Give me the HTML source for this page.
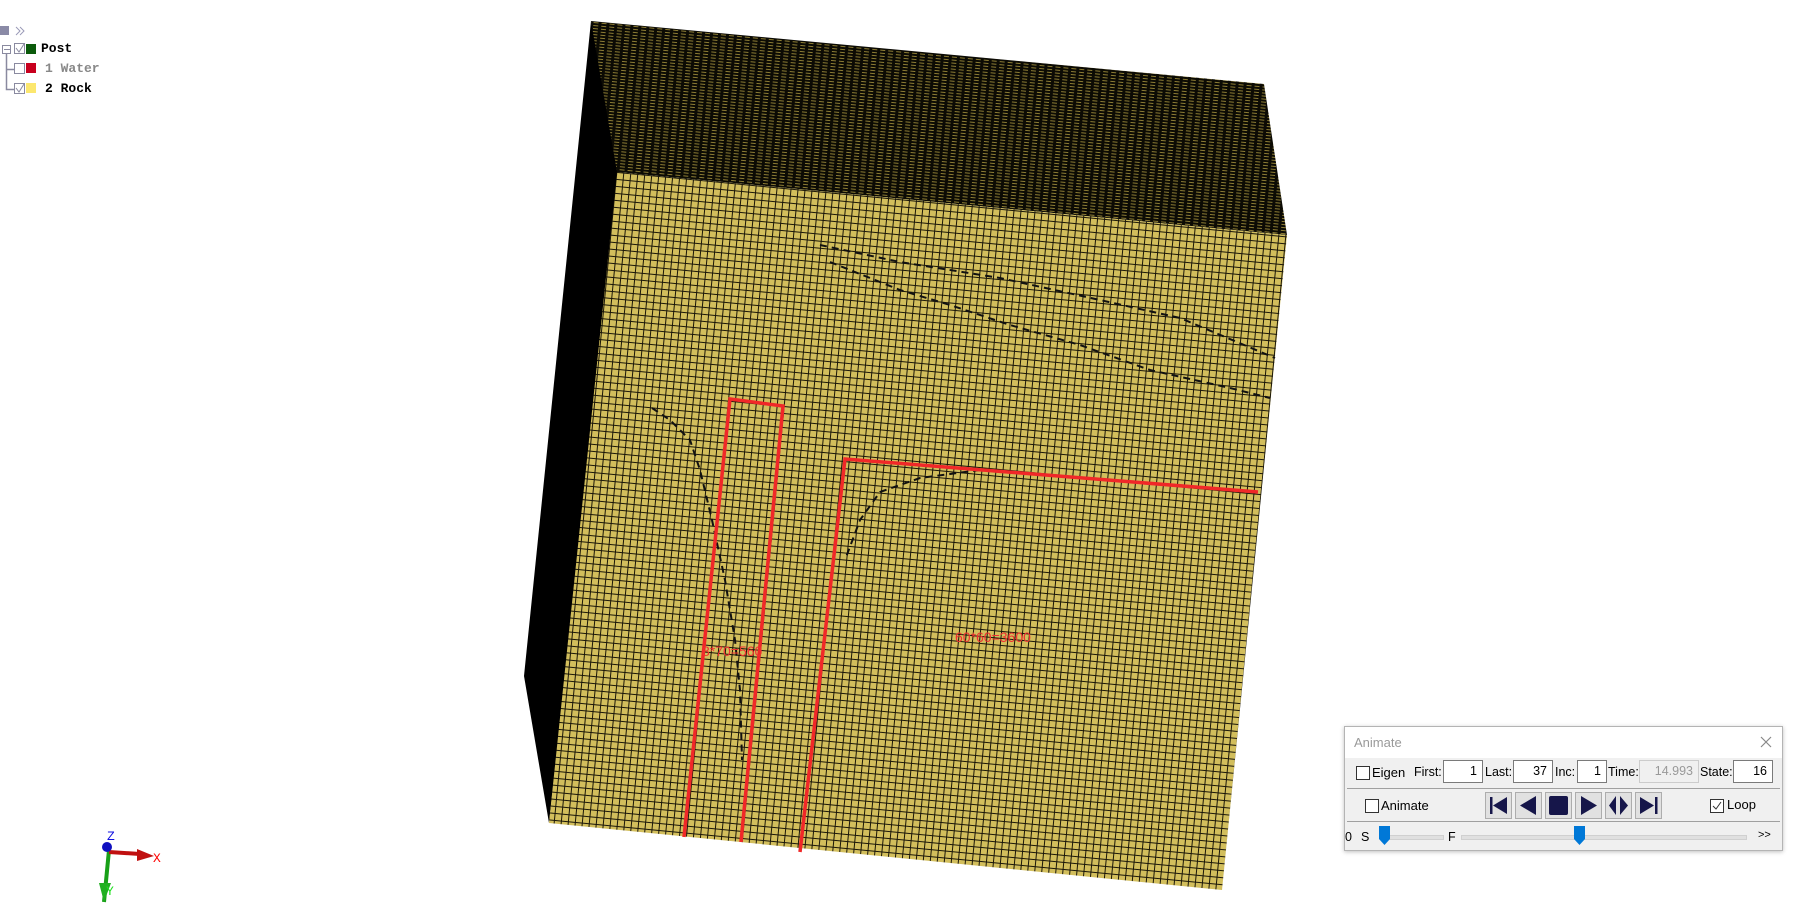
<!DOCTYPE html>
<html><head><meta charset="utf-8"><style>
html,body{margin:0;padding:0;background:#fff;width:1804px;height:908px;overflow:hidden;position:relative;font-family:"Liberation Sans","Noto Sans CJK SC",sans-serif}
.a{position:absolute}
.tree{font-family:"Liberation Mono","WenQuanYi Zen Hei",monospace;font-weight:bold;font-size:13px}
.pan{position:absolute;left:1344px;top:726px;width:437px;height:123px;background:#f0f0f0;border:1px solid #b4b4b4;box-shadow:0 1px 4px rgba(0,0,0,.25);font-size:12.5px;color:#000}
.pan .l{position:absolute;line-height:14px}
.inp{position:absolute;background:#fff;border:1px solid #7a7a7a;box-sizing:border-box;height:23px;text-align:right;padding-right:5px;line-height:21px;font-size:12.5px}
.cb{position:absolute;width:12px;height:12px;border:1px solid #333;background:#fff}
.btn{position:absolute;width:27px;height:27px;background:#e1e1e1;border:1px solid #adadad;box-sizing:border-box}
</style></head><body>
<svg class="a" style="left:0;top:0" width="1804" height="908">
<defs>
<pattern id="fg" width="7" height="7" patternUnits="userSpaceOnUse" patternTransform="rotate(5.5)">
<rect width="7" height="7" fill="#d2be5c"/><path d="M0 0.5H7M0.5 0V7" stroke="#1a1608" stroke-width="1"/>
</pattern>
<pattern id="tg" width="8" height="3" patternUnits="userSpaceOnUse" patternTransform="rotate(5.5)">
<rect width="8" height="3" fill="#0c0b04"/><rect x="1" y="1" width="5" height="1" fill="#8c7c34"/>
</pattern>
</defs>
<polygon points="591,21 622,171 549,823 524,676" fill="#000"/>
<polygon points="591,21 1264,84 1287,235 617,172" fill="url(#tg)"/>
<polygon points="617,172 1287,235 1222,890 549,823" fill="url(#fg)"/>
<g stroke="#111" stroke-width="2" fill="none" stroke-dasharray="7 5">
<path d="M820 245 L900 262 L1000 278 L1100 300 L1180 318 L1275 358"/>
<path d="M830 262 L900 290 L950 305 L1010 325 L1080 345 L1150 370 L1230 388 L1270 398"/>
<path d="M652 408 L670 420 L690 440 L700 470 L712 520 L725 580 L735 640 L740 690 L742 760"/>
<path d="M980 470 L920 478 L880 492 L860 520 L845 560"/>
</g>
<g stroke="#f02828" stroke-width="3.5" fill="none" stroke-linejoin="miter">
<path d="M684 837 L730 399 L783 406 L741 842"/>
<path d="M800 852 L845 459 L1258 492"/>
</g>
<text x="702" y="656" fill="#f03030" font-size="14" font-family="Liberation Sans,sans-serif">8*70=560</text>
<text x="955" y="642" fill="#f03030" font-size="14" font-family="Liberation Sans,sans-serif">60*60=3600</text>
<path d="M109 850 L104 902" stroke="#18a018" stroke-width="4"/>
<polygon points="99,883 111,883 104,902" fill="#20b020"/>
<path d="M109 852 L140 854" stroke="#c01010" stroke-width="4"/>
<polygon points="137,849 154,856 137,861" fill="#c01010"/>
<circle cx="107" cy="847" r="5" fill="#1010c0"/>
<text x="107" y="840" fill="#1010e0" font-size="13" font-family="Liberation Mono,monospace">Z</text>
<text x="153" y="862" fill="#f00" font-size="13" font-family="Liberation Mono,monospace">X</text>
<text x="106" y="895" fill="#20e020" font-size="13" font-family="Liberation Mono,monospace">Y</text>
<rect x="0" y="26" width="9" height="9" fill="#8a8aa6"/>
<path d="M16 27 L20 31 L16 35 M20 27 L24 31 L20 35" stroke="#9a9ab8" fill="none"/>
<rect x="2.5" y="45.5" width="8" height="8" fill="#fff" stroke="#8a8aa0"/>
<path d="M4 49.5H10" stroke="#8a8aa0"/>
<path d="M6.5 54 V89.5 H14 M6.5 69.5 H14" stroke="#8a8aa0" stroke-width="1.5" fill="none"/>
<rect x="14.5" y="43.5" width="10" height="10" fill="#fff" stroke="#8a8aa0"/>
<path d="M16 48 L19 52 L24 44" stroke="#8a8aa0" fill="none"/>
<rect x="26" y="44" width="10" height="10" fill="#0b5a0b"/>
<rect x="14.5" y="63.5" width="10" height="10" fill="#fff" stroke="#8a8aa0"/>
<rect x="26" y="63" width="10" height="10" fill="#c8001e"/>
<rect x="14.5" y="83.5" width="10" height="10" fill="#fff" stroke="#8a8aa0"/>
<path d="M16 88 L19 92 L24 84" stroke="#8a8aa0" fill="none"/>
<rect x="26" y="83" width="10" height="10" fill="#fce76e"/>
</svg>
<div class="a tree" style="left:41px;top:41px">Post</div>
<div class="a tree" style="left:45px;top:61px;color:#888">1 Water</div>
<div class="a tree" style="left:45px;top:81px">2 Rock</div>

<div class="pan">
<div style="position:absolute;left:0;top:0;right:0;height:31px;background:#fff"></div>
<div class="l" style="left:9px;top:9px;color:#9a9a9a;font-size:13px">Animate</div>
<svg style="position:absolute;left:415px;top:9px" width="12" height="12"><path d="M1 1L11 11M11 1L1 11" stroke="#888" stroke-width="1.2"/></svg>
<div class="cb" style="left:11px;top:39px"></div>
<div class="l" style="left:27px;top:39px;font-size:13px">Eigen</div>
<div class="l" style="left:69px;top:38px">First:</div>
<div class="inp" style="left:98px;top:33px;width:40px">1</div>
<div class="l" style="left:140px;top:38px">Last:</div>
<div class="inp" style="left:168px;top:33px;width:40px">37</div>
<div class="l" style="left:210px;top:38px">Inc:</div>
<div class="inp" style="left:232px;top:33px;width:30px">1</div>
<div class="l" style="left:263px;top:38px">Time:</div>
<div class="inp" style="left:294px;top:33px;width:60px;border-color:#ccc;color:#999;background:#f0f0f0">14.993</div>
<div class="l" style="left:355px;top:38px">State:</div>
<div class="inp" style="left:388px;top:33px;width:40px">16</div>
<div style="position:absolute;left:2px;right:2px;top:61px;height:1px;background:#a0a0a0"></div>
<div class="cb" style="left:20px;top:72px"></div>
<div class="l" style="left:36px;top:72px;font-size:13px">Animate</div>
<div class="btn" style="left:140px;top:65px"><svg width="25" height="25"><rect x="4" y="4" width="2.5" height="17" fill="#16164a"/><polygon points="7,12.5 21,4 21,21" fill="#16164a"/></svg></div>
<div class="btn" style="left:170px;top:65px"><svg width="25" height="25"><polygon points="4,12.5 20,3 20,22" fill="#16164a"/></svg></div>
<div class="btn" style="left:200px;top:65px"><svg width="25" height="25"><rect x="3" y="3" width="19" height="19" rx="2" fill="#16164a"/></svg></div>
<div class="btn" style="left:230px;top:65px"><svg width="25" height="25"><polygon points="5,3 21,12.5 5,22" fill="#16164a"/></svg></div>
<div class="btn" style="left:260px;top:65px"><svg width="25" height="25"><polygon points="3,12.5 10,3 10,22" fill="#16164a"/><polygon points="22,12.5 14,3 14,22" fill="#16164a"/></svg></div>
<div class="btn" style="left:290px;top:65px"><svg width="25" height="25"><polygon points="4,4 18,12.5 4,21" fill="#16164a"/><rect x="19" y="4" width="2.5" height="17" fill="#16164a"/></svg></div>
<div class="cb" style="left:365px;top:72px"><svg width="12" height="12" style="position:absolute;left:0;top:0"><path d="M2 6L5 9L10 2" stroke="#333" fill="none"/></svg></div>
<div class="l" style="left:382px;top:71px;font-size:13px">Loop</div>
<div style="position:absolute;left:2px;right:2px;top:94px;height:1px;background:#a0a0a0"></div>
<div class="l" style="left:0px;top:103px">0</div>
<div class="l" style="left:16px;top:103px">S</div>
<div style="position:absolute;left:40px;top:108px;width:57px;height:3px;background:#e0e0e0;border:1px solid #d0d0d0"></div>
<svg style="position:absolute;left:34px;top:99px" width="12" height="20"><path d="M0 0H11V13L5.5 19L0 13Z" fill="#0078d7"/></svg>
<div class="l" style="left:103px;top:103px">F</div>
<div style="position:absolute;left:116px;top:108px;width:284px;height:3px;background:#e0e0e0;border:1px solid #d0d0d0"></div>
<svg style="position:absolute;left:229px;top:99px" width="12" height="20"><path d="M0 0H11V13L5.5 19L0 13Z" fill="#0078d7"/></svg>
<div class="l" style="left:413px;top:101px;font-size:11px">&gt;&gt;</div>
</div>
</body></html>
